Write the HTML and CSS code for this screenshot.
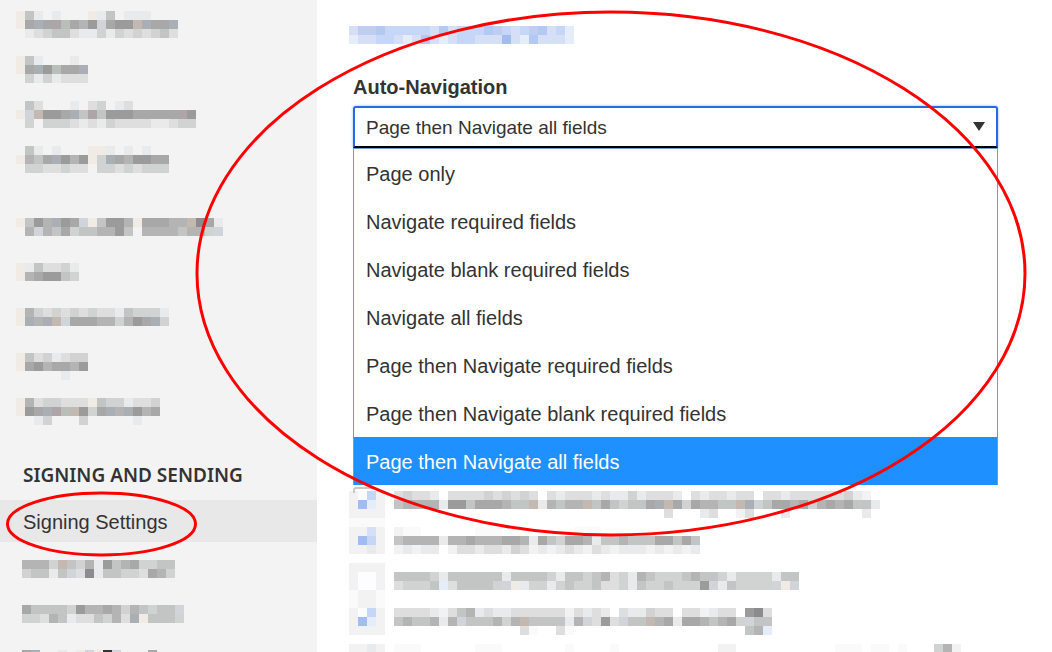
FILE: index.html
```html
<!DOCTYPE html>
<html lang="en">
<head>
  <meta charset="UTF-8" />
  <meta name="viewport" content="width=device-width, initial-scale=1.0"/>
  <title>Signing Settings</title>
  <link rel="stylesheet" href="styles.css">
</head>
<body>
  <div class="page">
    <nav class="sidebar">
      <ul class="nav-list">
        <li><svg class="mosaic" data-name="nav1"></svg></li>
        <li><svg class="mosaic" data-name="nav2"></svg></li>
        <li><svg class="mosaic" data-name="nav3"></svg></li>
        <li><svg class="mosaic" data-name="nav4"></svg></li>
      </ul>
      <ul class="nav-list second">
        <li><svg class="mosaic" data-name="nav5"></svg></li>
        <li><svg class="mosaic" data-name="nav6"></svg></li>
        <li><svg class="mosaic" data-name="nav7"></svg></li>
        <li><svg class="mosaic" data-name="nav8"></svg></li>
        <li><svg class="mosaic" data-name="nav9"></svg></li>
      </ul>
      <h2>SIGNING AND SENDING</h2>
      <a class="active" href="#signing">Signing Settings</a>
      <ul class="nav-list last">
        <li><svg class="mosaic" data-name="nav10"></svg></li>
        <li><svg class="mosaic" data-name="nav11"></svg></li>
        <li><svg class="mosaic" data-name="nav12"></svg></li>
      </ul>
    </nav>

    <main>
      <svg class="mosaic" data-name="link"></svg>
      <div class="field">
        <label for="auto-nav">Auto-Navigation</label>
        <div class="select-box">
          <select id="auto-nav">
            <option>Page only</option>
            <option>Navigate required fields</option>
            <option>Navigate blank required fields</option>
            <option>Navigate all fields</option>
            <option>Page then Navigate required fields</option>
            <option>Page then Navigate blank required fields</option>
            <option selected>Page then Navigate all fields</option>
          </select>
          <svg class="arrow" viewBox="0 0 12 9"><path d="M0 0h12L6 9z"/></svg>
          <ul class="menu" role="listbox" aria-label="Auto-Navigation">
            <li role="option">Page only</li>
            <li role="option">Navigate required fields</li>
            <li role="option">Navigate blank required fields</li>
            <li role="option">Navigate all fields</li>
            <li role="option">Page then Navigate required fields</li>
            <li role="option">Page then Navigate blank required fields</li>
            <li role="option" class="selected" aria-selected="true">Page then Navigate all fields</li>
          </ul>
        </div>
      </div>
      <div class="checks">
        <svg class="mosaic" data-name="checks"></svg>
      </div>
    </main>

    <svg class="marks" width="1052" height="652">
      <ellipse cx="611" cy="273.5" rx="414" ry="261.5"/>
      <ellipse cx="101.5" cy="524" rx="94" ry="31"/>
    </svg>
  </div>

  <script src="mosaic.js"></script>
</body>
</html>
```
FILE: styles.css
```css
* { box-sizing: border-box; }
body { margin: 0; background: #fff; color: #333; font-family: "Liberation Sans", Arial, sans-serif; font-size: 20px; }
ul { list-style: none; margin: 0; padding: 0; }
.page { position: relative; display: flex; height: 100vh; overflow: hidden; }
.mosaic { display: block; }

.sidebar { flex: 0 0 317px; background: #f3f3f3; padding-top: 11px; }
.nav-list { padding-left: 16px; }
.nav-list li { height: 45px; }
.nav-list.second { margin-top: 27px; }
.nav-list.last { padding: 18px 0 0 22px; }
.sidebar h2 { margin: 0; padding: 19px 23px 12px; font: 600 19px/26px "Noto Sans", sans-serif; }
.active { display: block; height: 42px; padding-left: 23px; line-height: 44px; background: #e8e8e8; color: #333; text-decoration: none; }

main { flex: 1; padding: 26px 54px 0 32px; }
.field { padding: 32px 0 0 4px; }
.field label { display: block; height: 30px; line-height: 22px; font-weight: bold; }
.select-box { position: relative; }
.select-box select { display: block; width: 100%; height: 42px; padding: 0 40px 0 11px; appearance: none; border: 2px solid #276be0; border-bottom-color: #000; border-radius: 3px 3px 0 0; outline: none; background: #fff; box-shadow: 0 0 3px #8fb5f5; color: #333; font: inherit; font-size: 19px; }
.arrow { position: absolute; top: 16px; right: 13px; width: 12px; height: 9px; fill: #333; }
.menu { position: absolute; top: 42px; left: 0; right: 0; border: 1px solid #7898d0; border-bottom: 0; background: #fff; }
.menu li { height: 48px; padding-left: 12px; line-height: 50px; }
.menu .selected { background: #1e90ff; color: #fff; }
.checks { position: relative; margin-top: 343px; }
.checks::before { content: ""; position: absolute; top: -4px; left: 4px; width: 20px; height: 4px; border: 2px solid #c8c8c8; border-width: 2px 0 0 2px; border-radius: 3px 0 0 0; }

.marks { position: absolute; top: 0; left: 0; fill: none; stroke: #f00; stroke-width: 3; pointer-events: none; }
```
FILE: mosaic.js
```js
const CELL = 9;

// one letter per cell, "." is left empty
const colors = {
  y: "#fafafa", z: "#f2f2f2", 1: "#e9eaeb", 2: "#dedede", 3: "#d1d2d2", 4: "#c3c4c4",
  5: "#b4b4b4", 6: "#a8a8a8", 7: "#9b9b9b", 8: "#8c8b8d", 9: "#333333",
  w: "#f1ebe5", c: "#d1d5da", b: "#a9afb5", p: "#aea5a8", g: "#b9beb9", t: "#c3b9b0",
  W: "#fdfdff", A: "#d5e0f7", B: "#bfcdf2", C: "#c6d6f6", D: "#b3c8f2", E: "#a1bdf0", F: "#e5ecfa"
};

const mosaics = {
  nav1: ["w41.1...w14.111...", "w6b6pg657c677tb66b", ".12344211313232342"],
  nav2: ["w41...1.", "w6b7g66b", ".3131222"],
  nav3: [".42...1.23.12.......", "wct776b4p477766666p7", ".3.33321213222211233"],
  nav4: [".41.1...ww1.1.1..", "w546b757w3b657766", ".3322322.33232333"],
  nav5: ["w475b76cw4775w66655t861", ".5c5463445574.55554553c"],
  nav6: ["w142231", "w567743"],
  nav7: ["w5323232322143331", "wb5btc666553576b3"],
  nav8: ["w4231233", "w6756657", ".....1.."],
  nav9: ["w5233222w4331223", "w76bpgt736b5b756", "..13...3.....1.."],
  nav10: ["5553t435174563344", "34414c28144332653"],
  nav11: ["64444375565354344c", "332541224352bw4443"],
  nav12: ["6b..1.wcw9c...6"],
  link: ["ABBDCCCCCADACCCDBCACBDACF", "FAACCAFADAFACCAAAEAFDAAAF"],
  checks: [
    "zWCz.23221.2222323232.212221211312221.2122122.22122222231z",
    "zEFz.455551774666544t15455t4643446bt6365544tb34665635656441",
    "zzzz...............................2...12..z2...1........1",
    "yyyy",
    "zzAz.zyy......yyy........yyy",
    "zECz.4555515565556651643665144544466464",
    "zz1z.z1z11.z22122132z1z121z21z111z1z1z1",
    "",
    "zzzz",
    "zWWz.444431444444144443144345231543334544313333144",
    "zWWz.23334F244443cw133134334223143343337c143333cwc",
    "yzzy",
    "yzzy",
    "zWCz.22221z2451211222222z2121.211322.22z122.782",
    "zEFz.4544515c444535t444415c272c44t5616654563c44",
    "zzzz...............2y..2y...................45F",
    "",
    "zz1z.yyy......yyy.......y....y...........zz...........yyy.yy.y...35z"
  ]
};

document.querySelectorAll(".mosaic").forEach(svg => {
  const rows = mosaics[svg.dataset.name];
  svg.setAttribute("width", Math.max(...rows.map(r => r.length)) * CELL);
  svg.setAttribute("height", rows.length * CELL);
  svg.setAttribute("shape-rendering", "crispEdges");
  rows.forEach((row, y) => {
    [...row].forEach((key, x) => {
      if (key === ".") return;
      const rect = document.createElementNS("http://www.w3.org/2000/svg", "rect");
      rect.setAttribute("x", x * CELL);
      rect.setAttribute("y", y * CELL);
      rect.setAttribute("width", CELL);
      rect.setAttribute("height", CELL);
      rect.setAttribute("fill", colors[key]);
      svg.appendChild(rect);
    });
  });
});
```
